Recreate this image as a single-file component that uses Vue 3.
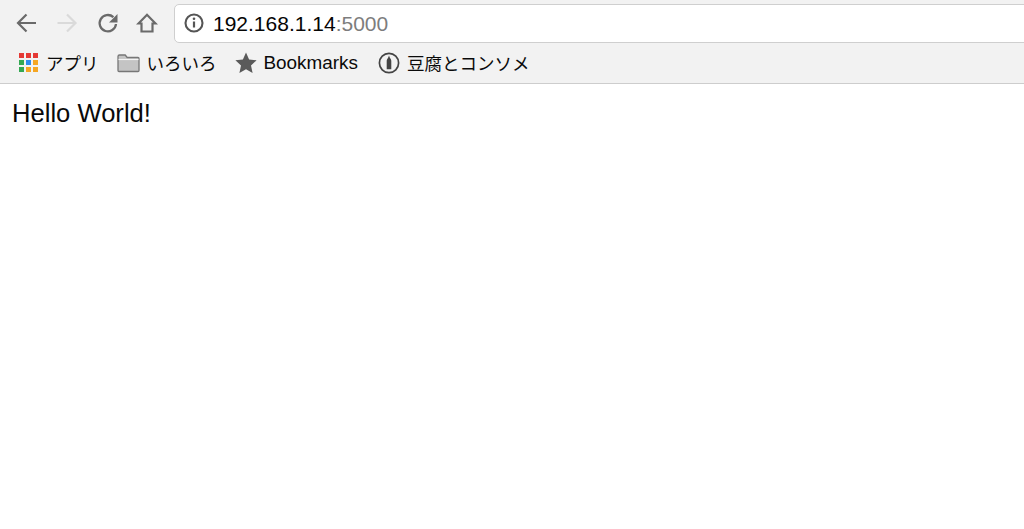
<script setup>
const apps = ['#e53935','#e53935','#e53935','#34a853','#2d8cf0','#f5a623','#34a853','#f5a623','#f5a623']
</script>

<template>
  <div class="page">
    <header class="chrome">
      <div class="toolbar">
        <svg class="nav back" width="24" height="24" viewBox="0 0 24 24" fill="none" stroke="#6a6a6a" stroke-width="2.200">
          <path d="M22 12H4M12.500 3.500 4 12l8.500 8.500"/>
        </svg>
        <svg class="nav forward" width="24" height="24" viewBox="0 0 24 24" fill="none" stroke="#dadada" stroke-width="2.200">
          <path d="M2.500 12h18M12 3.500l8.500 8.500-8.500 8.500"/>
        </svg>
        <svg class="nav reload" width="24" height="24" viewBox="0 0 24 24" fill="none">
          <path d="M20 13a8.200 8.200 0 1 1-2.600-6.800" stroke="#6a6a6a" stroke-width="2.300"/>
          <path d="M21.500 3v8.500H13z" fill="#6a6a6a"/>
        </svg>
        <svg class="nav home" width="22" height="24" viewBox="0 0 22 24" fill="none" stroke="#6a6a6a" stroke-width="2.200">
          <path d="M2.500 12.500 11 3.800l8.500 8.700h-3v8H5.500v-8z"/>
        </svg>
        <div class="omnibox">
          <svg width="20" height="20" viewBox="0 0 20 20" fill="none">
            <circle cx="10" cy="10" r="8.500" stroke="#555" stroke-width="2.100"/>
            <path d="M10 8.500v6" stroke="#555" stroke-width="2.200"/>
            <circle cx="10" cy="5.800" r="1.300" fill="#555"/>
          </svg>
          <span class="url">192.168.1.14<span class="port">:5000</span></span>
        </div>
      </div>
      <nav class="bookmarks">
        <div class="bookmark apps-item">
          <span class="apps">
            <i v-for="(c, i) in apps" :key="i" class="dot" :style="{ background: c }"></i>
          </span>
          <span>アプリ</span>
        </div>
        <div class="bookmark folder-item">
          <svg width="23" height="20" viewBox="0 0 23 20">
            <path d="M1 3.500A1.500 1.500 0 0 1 2.500 2h5.700l2 2.500h10.800A1 1 0 0 1 22 5.500v12a1 1 0 0 1-1 1H2a1 1 0 0 1-1-1z" fill="#c4c4c4" stroke="#777" stroke-width="1.300"/>
            <path d="M1.500 6.500h20" stroke="#f4f4f4" stroke-width="1.200"/>
          </svg>
          <span>いろいろ</span>
        </div>
        <div class="bookmark star-item">
          <svg width="22" height="22" viewBox="0 0 22 22">
            <path d="m11 .5 3.100 7 7.500.8-5.600 5.100 1.600 7.600-6.600-3.800L4.400 21 6 13.400.4 8.300l7.500-.8z" fill="#5a5a5a"/>
          </svg>
          <span class="latin">Bookmarks</span>
        </div>
        <div class="bookmark tofu-item">
          <svg width="22" height="22" viewBox="0 0 22 22" fill="none">
            <circle cx="11" cy="11" r="9.600" stroke="#444" stroke-width="1.700"/>
            <path d="M11 3.500c.4 1.300.7 1.800 1 2.500.9 1 1.300 1.800 1.300 3.200v8H8.700v-8c0-1.400.4-2.200 1.300-3.200.3-.7.600-1.200 1-2.500z" fill="#444"/>
          </svg>
          <span>豆腐とコンソメ</span>
        </div>
      </nav>
    </header>
    <main class="content">Hello World!</main>
  </div>
</template>

<style scoped>
.page {
  min-height: 529px;
  background: #fff;
  color: #0a0a0a;
  font-family: "Liberation Sans", "Noto Sans CJK JP", sans-serif;
}
.chrome {
  height: 84px;
  box-sizing: border-box;
  background: #f2f2f2;
  border-bottom: 1px solid #cdcdcd;
  overflow: hidden;
}
.toolbar {
  display: flex;
  align-items: center;
  height: 42px;
  padding: 4px 0 0 14px;
  box-sizing: border-box;
}
.nav { flex: none; }
.forward { margin-left: 17px; }
.reload { margin-left: 17px; }
.home { margin-left: 16px; }
.omnibox {
  flex: none;
  display: flex;
  align-items: center;
  width: 900px;
  height: 39px;
  margin-left: 16px;
  padding-left: 9px;
  box-sizing: border-box;
  background: #fff;
  border: 1px solid #cfcfcf;
  border-radius: 5px;
}
.url {
  margin-left: 9px;
  padding-top: 1px;
  font-size: 21px;
  color: #050505;
}
.port { color: #7d7d7d; }
.bookmarks {
  display: flex;
  align-items: center;
  height: 41px;
  padding-left: 19px;
  font-size: 17.5px;
}
.bookmark {
  display: flex;
  align-items: center;
  gap: 8px;
  white-space: nowrap;
}
.latin { font-size: 18.900px; }
.star-item, .tofu-item, .folder-item { gap: 7px; }
.apps {
  display: grid;
  grid-template-columns: repeat(3, 5px);
  grid-auto-rows: 5px;
  gap: 2px;
}
.dot { display: block; }
.folder-item { margin-left: 18px; }
.star-item { margin-left: 18px; }
.tofu-item { margin-left: 20px; }
.content {
  padding: 15px 12px;
  font-size: 25.600px;
  line-height: 28px;
}
</style>
